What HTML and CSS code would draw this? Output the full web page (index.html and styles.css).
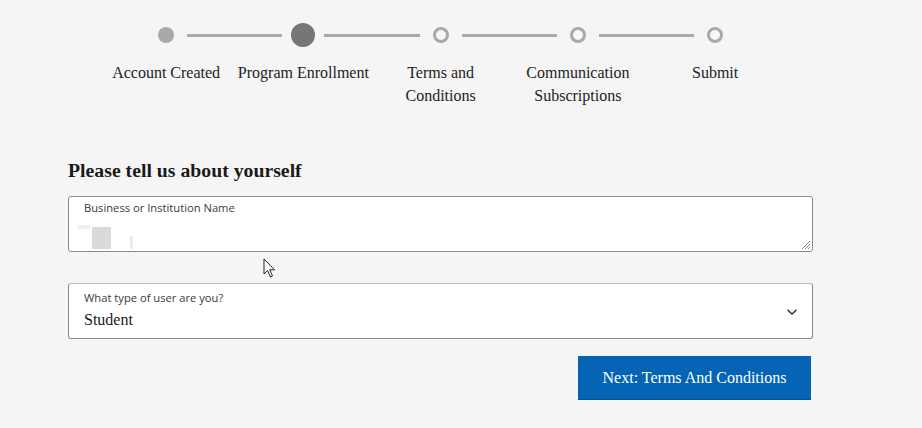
FILE: index.html
```html
<!DOCTYPE html>
<html lang="en">
<head>
<meta charset="utf-8">
<title>Program Enrollment</title>
<link rel="stylesheet" href="styles.css">
</head>
<body>
<div class="page">
  <div class="stepper">
    <div class="track">
      <div class="dot-cell"><span class="dot done"></span></div>
      <span class="line"></span>
      <div class="dot-cell"><span class="dot current"></span></div>
      <span class="line"></span>
      <div class="dot-cell"><span class="dot todo"></span></div>
      <span class="line"></span>
      <div class="dot-cell"><span class="dot todo"></span></div>
      <span class="line"></span>
      <div class="dot-cell"><span class="dot todo"></span></div>
    </div>
    <div class="labels">
      <div class="label">Account Created</div>
      <div class="label">Program Enrollment</div>
      <div class="label">Terms and<br>Conditions</div>
      <div class="label">Communication<br>Subscriptions</div>
      <div class="label">Submit</div>
    </div>
  </div>

  <form class="form">
    <h2 class="title">Please tell us about yourself</h2>

    <div class="field textarea-field">
      <div class="field-label">Business or Institution Name</div>
      <div class="redacted"><span class="r1"></span><span class="r2"></span><span class="r3"></span></div>
      <svg class="resize" width="12" height="12" viewBox="0 0 12 12"><path d="M11 3 L3 11 M11 6 L6 11 M11 9 L9 11" stroke="#8a8a8a" stroke-width="1" fill="none"/></svg>
    </div>

    <div class="field select-field">
      <div class="select-text">
        <div class="field-label">What type of user are you?</div>
        <div class="select-value">Student</div>
      </div>
      <svg class="chevron" width="12" height="8" viewBox="0 0 12 8"><path d="M1.5 1.8 L6 6 L10.5 1.8" stroke="#333" stroke-width="1.5" fill="none"/></svg>
    </div>

    <div class="actions">
      <button type="button" class="next-btn">Next: Terms And Conditions</button>
    </div>
  </form>

  <svg class="cursor" width="14" height="21" viewBox="0 0 14 21"><path d="M1 1 L1 16 L4.5 12.5 L7.5 19 L9.5 18 L6.7 11.8 L11.5 11.8 Z" fill="#fff" stroke="#222" stroke-width="1" stroke-linejoin="round"/></svg>
</div>
</body>
</html>
```

FILE: styles.css
```css
* { box-sizing: border-box; }

html, body {
  margin: 0;
  padding: 0;
  background: #f5f5f5;
}

body {
  font-family: "Liberation Serif", "Times New Roman", serif;
  color: #222;
  width: 922px;
  height: 428px;
  overflow: hidden;
}

.page {
  position: relative;
  padding-top: 23px;
}

.track {
  display: flex;
  align-items: center;
  margin-left: 145px;
  height: 24px;
}

.dot-cell {
  width: 42px;
  height: 24px;
  display: flex;
  align-items: center;
  justify-content: center;
  flex: none;
}

.dot {
  display: block;
  border-radius: 50%;
}

.dot.done {
  width: 16px;
  height: 16px;
  background: #a9a9a9;
}

.dot.current {
  width: 24px;
  height: 24px;
  background: #767676;
}

.dot.todo {
  width: 16px;
  height: 16px;
  border: 3px solid #a9a9a9;
  background: #f7f7f7;
}

.line {
  display: block;
  width: 95.25px;
  height: 3px;
  background: #a9a9a9;
  flex: none;
}

.labels {
  display: flex;
  margin-left: 97.5px;
  margin-top: 15px;
}

.label {
  width: 137.25px;
  flex: none;
  text-align: center;
  font-size: 16px;
  line-height: 22.5px;
  color: #222;
}

.form {
  width: 745px;
  margin-left: 68px;
  margin-top: 52px;
}

.title {
  margin: 0 0 15px;
  font-size: 19.75px;
  line-height: 22px;
  font-weight: bold;
  color: #1a1a1a;
}

.field {
  position: relative;
  background: #fff;
  border: 1px solid #8a8a8a;
  border-radius: 3px;
  height: 56px;
}

.field-label {
  font-family: "Open Sans", "Noto Sans", sans-serif;
  font-size: 11.2px;
  line-height: 14px;
  color: #3a3a3a;
}

.textarea-field {
  padding: 4px 15px 0;
}

.redacted {
  display: flex;
  align-items: flex-end;
  height: 34px;
  margin-left: -6px;
}

.redacted span {
  display: block;
  background: #dcd9d9;
}

.redacted .r1 {
  width: 12px;
  height: 4px;
  background: #f1efef;
  margin-bottom: 20px;
}

.redacted .r2 {
  width: 19px;
  height: 22px;
  margin-left: 2px;
}

.redacted .r3 {
  width: 3px;
  height: 13px;
  margin-left: 19px;
  background: #ececec;
}

.resize {
  position: absolute;
  right: 1px;
  bottom: 1px;
}

.select-field {
  margin-top: 31px;
  border-top-color: #b8b8b8;
  display: flex;
  align-items: flex-start;
  justify-content: space-between;
  padding: 7px 14px 0 15px;
}

.select-value {
  margin-top: 5px;
  font-size: 16px;
  line-height: 20px;
  color: #1a1a1a;
}

.chevron {
  margin-top: 17px;
}

.actions {
  display: flex;
  justify-content: flex-end;
  margin-top: 17px;
  padding-right: 2px;
}

.next-btn {
  width: 233px;
  height: 44px;
  border: none;
  border-bottom: 1px solid #0a4f8c;
  background: #0565b4;
  color: #fff;
  font-family: "Liberation Serif", "Times New Roman", serif;
  font-size: 16px;
  padding: 0;
  cursor: pointer;
}

.cursor {
  position: absolute;
  left: 263px;
  top: 258px;
}
```
